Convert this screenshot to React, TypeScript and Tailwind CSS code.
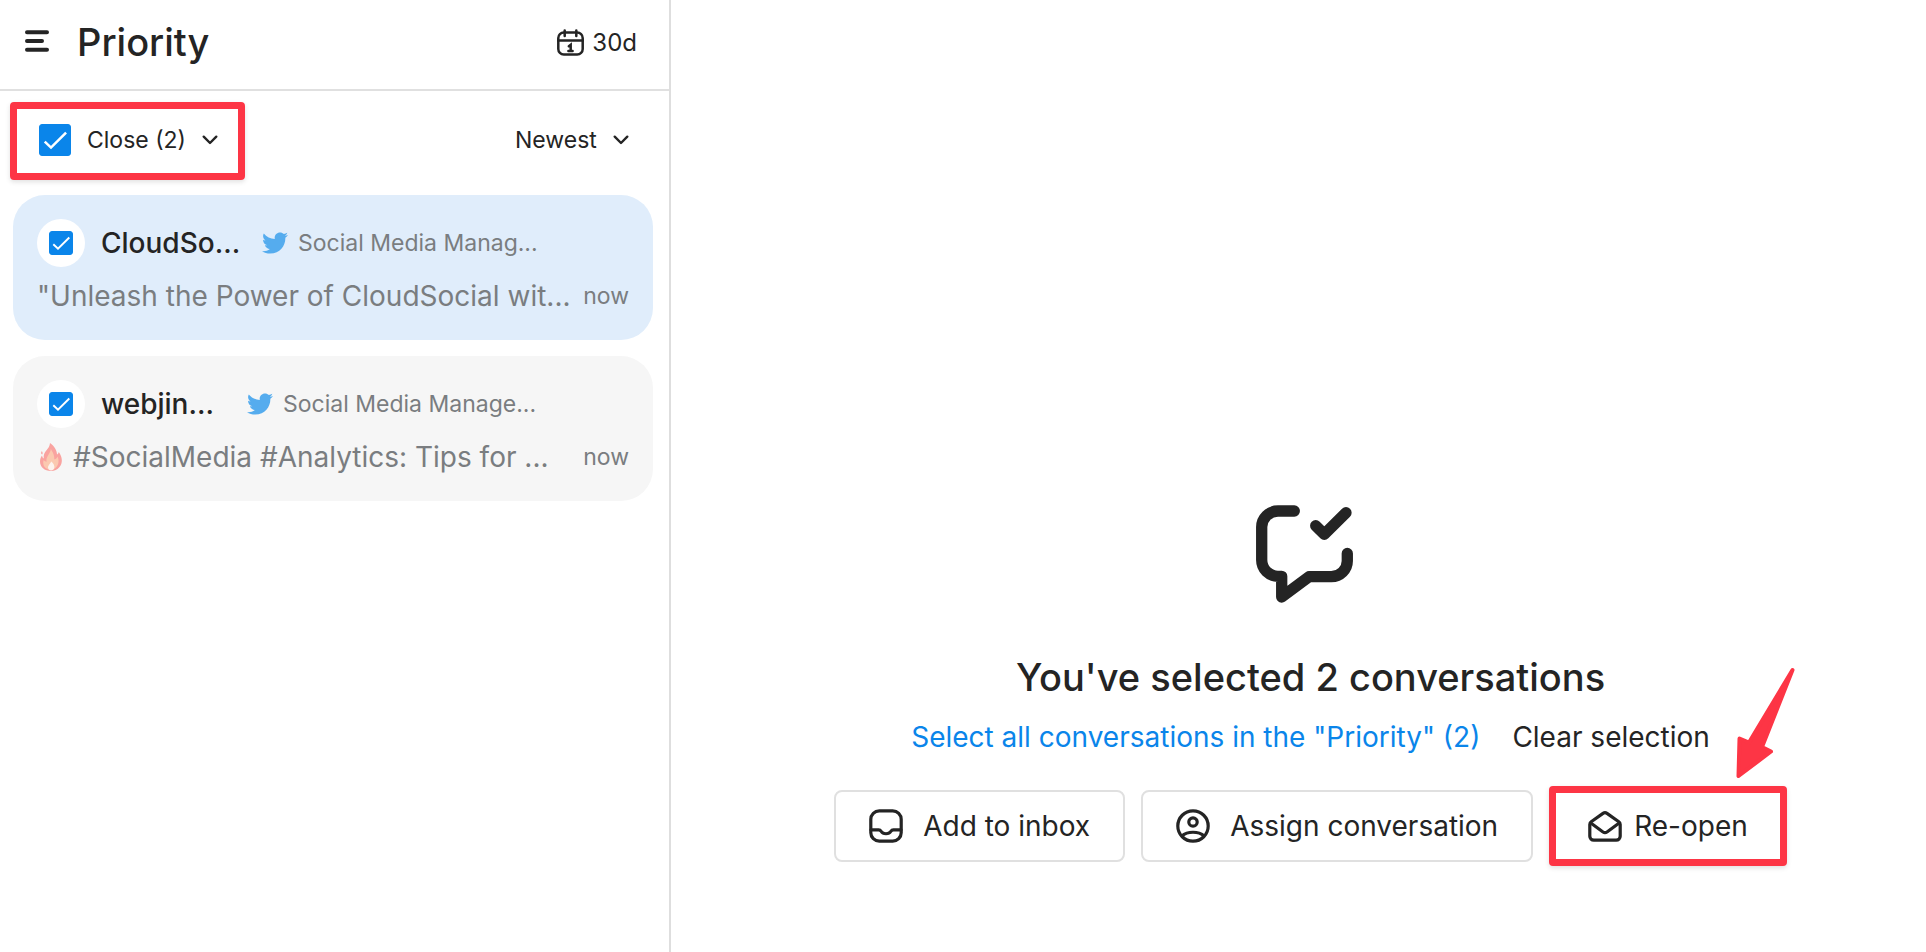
import { useState } from 'react';
import type { ReactNode } from 'react';
import { FaTwitter } from 'react-icons/fa';

type Conversation = {
    id: number;
    name: string;
    nameClass: string;
    channel: string;
    preview: string;
    fire: boolean;
    time: string;
    cardClass: string;
};

const conversations: Conversation[] = [
    {
        id: 1,
        name: 'CloudSo...',
        nameClass: 'w-[145px]',
        channel: 'Social Media Manag...',
        preview: '"Unleash the Power of CloudSocial wit...',
        fire: false,
        time: 'now',
        cardClass: 'bg-[#e0edfb]',
    },
    {
        id: 2,
        name: 'webjin...',
        nameClass: 'w-[130px]',
        channel: 'Social Media Manage...',
        preview: '#SocialMedia #Analytics: Tips for ...',
        fire: true,
        time: 'now',
        cardClass: 'bg-[#f6f6f6]',
    },
];

function MenuIcon() {
    return (
        <svg width="24" height="24" viewBox="0 0 24 24" fill="none" stroke="currentColor" strokeWidth="4" strokeLinecap="round">
            <path d="M2 3.3H22M2 12H17M2 20.7H22" />
        </svg>
    );
}

function CalendarIcon() {
    return (
        <svg width="27" height="27" viewBox="0 0 27 27" fill="none" stroke="currentColor" strokeWidth="2.5" strokeLinecap="round">
            <rect x="1.3" y="3.6" width="24.4" height="21.8" rx="5.5" />
            <path d="M7.7 1.4V7M19.3 1.4V7" />
            <path d="M1.3 11.4H25.7" />
            <path d="M11.8 17.2L13.7 15.8V21.8M11.4 22H15.6" />
        </svg>
    );
}

function ChevronIcon() {
    return (
        <svg width="16" height="10" viewBox="0 0 16 10" fill="none" stroke="currentColor" strokeWidth="2.4" strokeLinecap="round" strokeLinejoin="round">
            <path d="M1.7 1.7L8 8L14.3 1.7" />
        </svg>
    );
}

function BubbleCheckIcon() {
    return (
        <svg width="98" height="98" viewBox="0 0 98 98" fill="none" stroke="currentColor" strokeWidth="11.3" strokeLinecap="round" strokeLinejoin="round">
            <path d="M38.3 6H22C13 6 5.7 13.3 5.7 22V55C5.7 64 13 71.3 22 71.3H25.7V92L53 71.7H75.3C84.3 71.7 91.3 64.4 91.3 56V48.5" />
            <path d="M59.7 20.7L68.3 29.3L90 7.7" />
        </svg>
    );
}

function InboxIcon() {
    return (
        <svg width="34" height="34" viewBox="0 0 34 34" fill="none" stroke="currentColor" strokeWidth="3.2" strokeLinecap="round">
            <rect x="1.8" y="1.8" width="30.4" height="30.4" rx="8.5" />
            <path d="M2 20.8H9.6C11 20.8 11.6 21.4 12.3 22.5C14 25.5 20 25.5 21.7 22.5C22.4 21.4 23 20.8 24.4 20.8H32" />
        </svg>
    );
}

function AccountIcon() {
    return (
        <svg width="34" height="34" viewBox="0 0 34 34" fill="none" stroke="currentColor" strokeWidth="3.2">
            <circle cx="17" cy="17" r="15.2" />
            <circle cx="17" cy="13" r="4.2" />
            <path d="M5.8 27C11.5 22 22.5 22 28.2 27" />
        </svg>
    );
}

function EnvelopeIcon() {
    return (
        <svg width="34" height="31" viewBox="0 0 34 31" fill="none" stroke="currentColor" strokeWidth="3.2" strokeLinecap="round" strokeLinejoin="round">
            <path d="M1.8 13.5C1.8 12.3 2.3 11.4 3.2 10.7L15 2.4Q17 1 19 2.4L30.8 10.7C31.7 11.4 32.2 12.3 32.2 13.5V25.2A4 4 0 0 1 28.2 29.2H5.8A4 4 0 0 1 1.8 25.2Z" />
            <path d="M2.8 12L15 21Q17 22.4 19 21L31.2 12" />
        </svg>
    );
}

function FireIcon() {
    return (
        <svg width="24" height="28" viewBox="0 0 24 28" className="shrink-0" aria-label="fire">
            <path d="M11 0C15.5 3 18 7.5 18 11.5C19 11 19.5 10.2 19.8 9C23.5 14 24 20 20.5 24C18.5 26.5 15.5 28 12 28C5.5 28 1 24 1 18.5C1 16 1.8 14 3 12.5C3.3 14 3.9 15 4.8 15.5C4.2 12 5.5 9.5 7.5 7.2C9.5 5 10.8 3 11 0Z" fill="#f9a3a0" />
            <path d="M2.6 8.2C3.7 8.8 3.9 10.3 3.2 11.6C2 11 1.8 9.5 2.6 8.2Z" fill="#f9a3a0" />
            <path d="M11.8 6C13.5 9 15.5 11.5 15.3 16.5C17 16 18 15 18.5 13.5C20.5 18 19.5 22 17 24.5C15.5 26 13.8 26.8 12 26.8C7.5 26.8 4.2 23.8 4.2 19.5C4.2 18.5 4.4 17.7 4.7 17C5.5 18.2 6.5 18.7 7.6 18.7C6.5 13.5 11.5 11 11.8 6Z" fill="#fbc9b0" />
            <path d="M12.3 18.5C14.5 20.5 15.8 22.5 15.3 24.8C14.9 26.5 13.6 27.4 12.1 27.4C10.5 27.4 9.2 26.4 9 24.8C8.7 22.5 11 21 12.3 18.5Z" fill="#fdf3ee" />
        </svg>
    );
}

function CheckBox({ label, checked, onChange, sizeClass }: { label: string; checked: boolean; onChange: () => void; sizeClass: string }) {
    return (
        <span className={`relative block shrink-0 ${sizeClass}`}>
            <input
                type="checkbox"
                aria-label={label}
                checked={checked}
                onChange={onChange}
                className="peer block h-full w-full cursor-pointer appearance-none rounded-[3px] border border-[#0a85ea] bg-white checked:bg-[#0a85ea]"
            />
            <svg
                viewBox="0 0 24 24"
                fill="none"
                stroke="white"
                strokeWidth="1.9"
                className="pointer-events-none absolute inset-0 hidden h-full w-full peer-checked:block"
            >
                <path d="M4.3 13.2L9 17.7L20.3 6.5" />
            </svg>
        </span>
    );
}

function ActionButton({ icon, children }: { icon: ReactNode; children: ReactNode }) {
    return (
        <button type="button" className="flex h-[72px] items-center gap-5 rounded-lg border-2 border-[#e0e0e0] bg-white px-[33px]">
            {icon}
            {children}
        </button>
    );
}

export default function App() {
    const [selected, setSelected] = useState<number[]>([1, 2]);
    const allSelected = selected.length === conversations.length;

    const toggle = (id: number) => {
        setSelected(selected.includes(id) ? selected.filter((s) => s !== id) : [...selected, id]);
    };
    const selectAll = () => setSelected(conversations.map((c) => c.id));

    return (
        <main className="flex min-h-screen bg-white font-[Inter,sans-serif] text-[#242424]">
            <aside className="w-[671px] shrink-0 border-r-2 border-[#dedede]">
                <header className="flex h-[91px] items-center justify-between border-b-2 border-[#e0e0e0] pr-8 pb-1 pl-[25px]">
                    <div className="flex items-center gap-7">
                        <button type="button" aria-label="Menu" className="pb-1">
                            <MenuIcon />
                        </button>
                        <h1 className="text-[38px] font-medium">Priority</h1>
                    </div>
                    <button type="button" className="flex items-center gap-2 text-[24px]">
                        <CalendarIcon />
                        30d
                    </button>
                </header>

                <div className="flex items-center justify-between pt-[11px] pr-10 pl-[10px]">
                    <div className="flex h-[78px] items-center gap-4 rounded-sm border-[7px] border-[#fd3545] pr-5 pb-[2px] pl-[22px] shadow-[0_2px_5px_rgba(0,0,0,0.12)]">
                        <CheckBox
                            label="Select all"
                            checked={allSelected}
                            onChange={() => (allSelected ? setSelected([]) : selectAll())}
                            sizeClass="size-8"
                        />
                        <button type="button" className="flex items-center gap-4 text-[23px]">
                            Close (2)
                            <ChevronIcon />
                        </button>
                    </div>
                    <div className="relative flex items-center pb-[2px] text-[23px]">
                        <select aria-label="Sort" className="cursor-pointer appearance-none bg-transparent pr-8">
                            <option>Newest</option>
                            <option>Oldest</option>
                        </select>
                        <span className="pointer-events-none absolute right-0">
                            <ChevronIcon />
                        </span>
                    </div>
                </div>

                <div className="flex flex-col gap-4 pt-[15px] pr-4 pl-[13px]">
                    {conversations.map((c) => (
                        <article key={c.id} className={`rounded-[32px] p-6 ${c.cardClass}`}>
                            <div className="flex items-center">
                                <div className="flex size-12 shrink-0 items-center justify-center rounded-full bg-white">
                                    <CheckBox
                                        label={`Select ${c.name}`}
                                        checked={selected.includes(c.id)}
                                        onChange={() => toggle(c.id)}
                                        sizeClass="size-6"
                                    />
                                </div>
                                <h2 className={`ml-4 text-[28px] font-medium whitespace-nowrap ${c.nameClass}`}>{c.name}</h2>
                                <FaTwitter size={26} className="ml-4 shrink-0 text-[#55acee]" />
                                <span className="ml-[10px] text-[23px] whitespace-nowrap text-[#7a7d80]">{c.channel}</span>
                            </div>
                            <div className="mt-[9px] flex h-10 items-center justify-between text-[#7a7d80]">
                                <p className="flex items-center gap-[10px] text-[28px] whitespace-nowrap">
                                    {c.fire && (
                                        <span className="pl-[2px]">
                                            <FireIcon />
                                        </span>
                                    )}
                                    {c.preview}
                                </p>
                                <time className="text-[23px]">{c.time}</time>
                            </div>
                        </article>
                    ))}
                </div>
            </aside>

            <section className="flex flex-1 flex-col items-center justify-end pb-[86px] pl-6 text-[28px] whitespace-nowrap">
                <div className="mr-3">
                    <BubbleCheckIcon />
                </div>
                <h2 className="mt-[50px] text-[38px] leading-[48px] font-medium">You've selected 2 conversations</h2>
                <div className="mt-4 flex items-center gap-8 leading-10">
                    <button type="button" onClick={selectAll} className="text-[#0a85ea]">
                        Select all conversations in the "Priority" (2)
                    </button>
                    <button type="button" onClick={() => setSelected([])}>
                        Clear selection
                    </button>
                </div>
                <div className="mt-[29px] flex items-center gap-4">
                    <ActionButton icon={<InboxIcon />}>Add to inbox</ActionButton>
                    <ActionButton icon={<AccountIcon />}>Assign conversation</ActionButton>
                    <div className="relative">
                        <button
                            type="button"
                            className="flex h-20 items-center gap-3 rounded-sm border-[7px] border-[#fd3545] bg-white px-8 shadow-[0_2px_5px_rgba(0,0,0,0.12)]"
                        >
                            <EnvelopeIcon />
                            Re-open
                        </button>
                        <svg width="66" height="118" viewBox="0 0 66 118" className="pointer-events-none absolute -top-[121px] -right-3">
                            <path
                                d="M59.5 5L29 82L38 86.5L5.5 111L6.5 73.5L16 77.5Z"
                                fill="#fd3545"
                                stroke="#fd3545"
                                strokeWidth="4"
                                strokeLinejoin="round"
                            />
                        </svg>
                    </div>
                </div>
            </section>
        </main>
    );
}
